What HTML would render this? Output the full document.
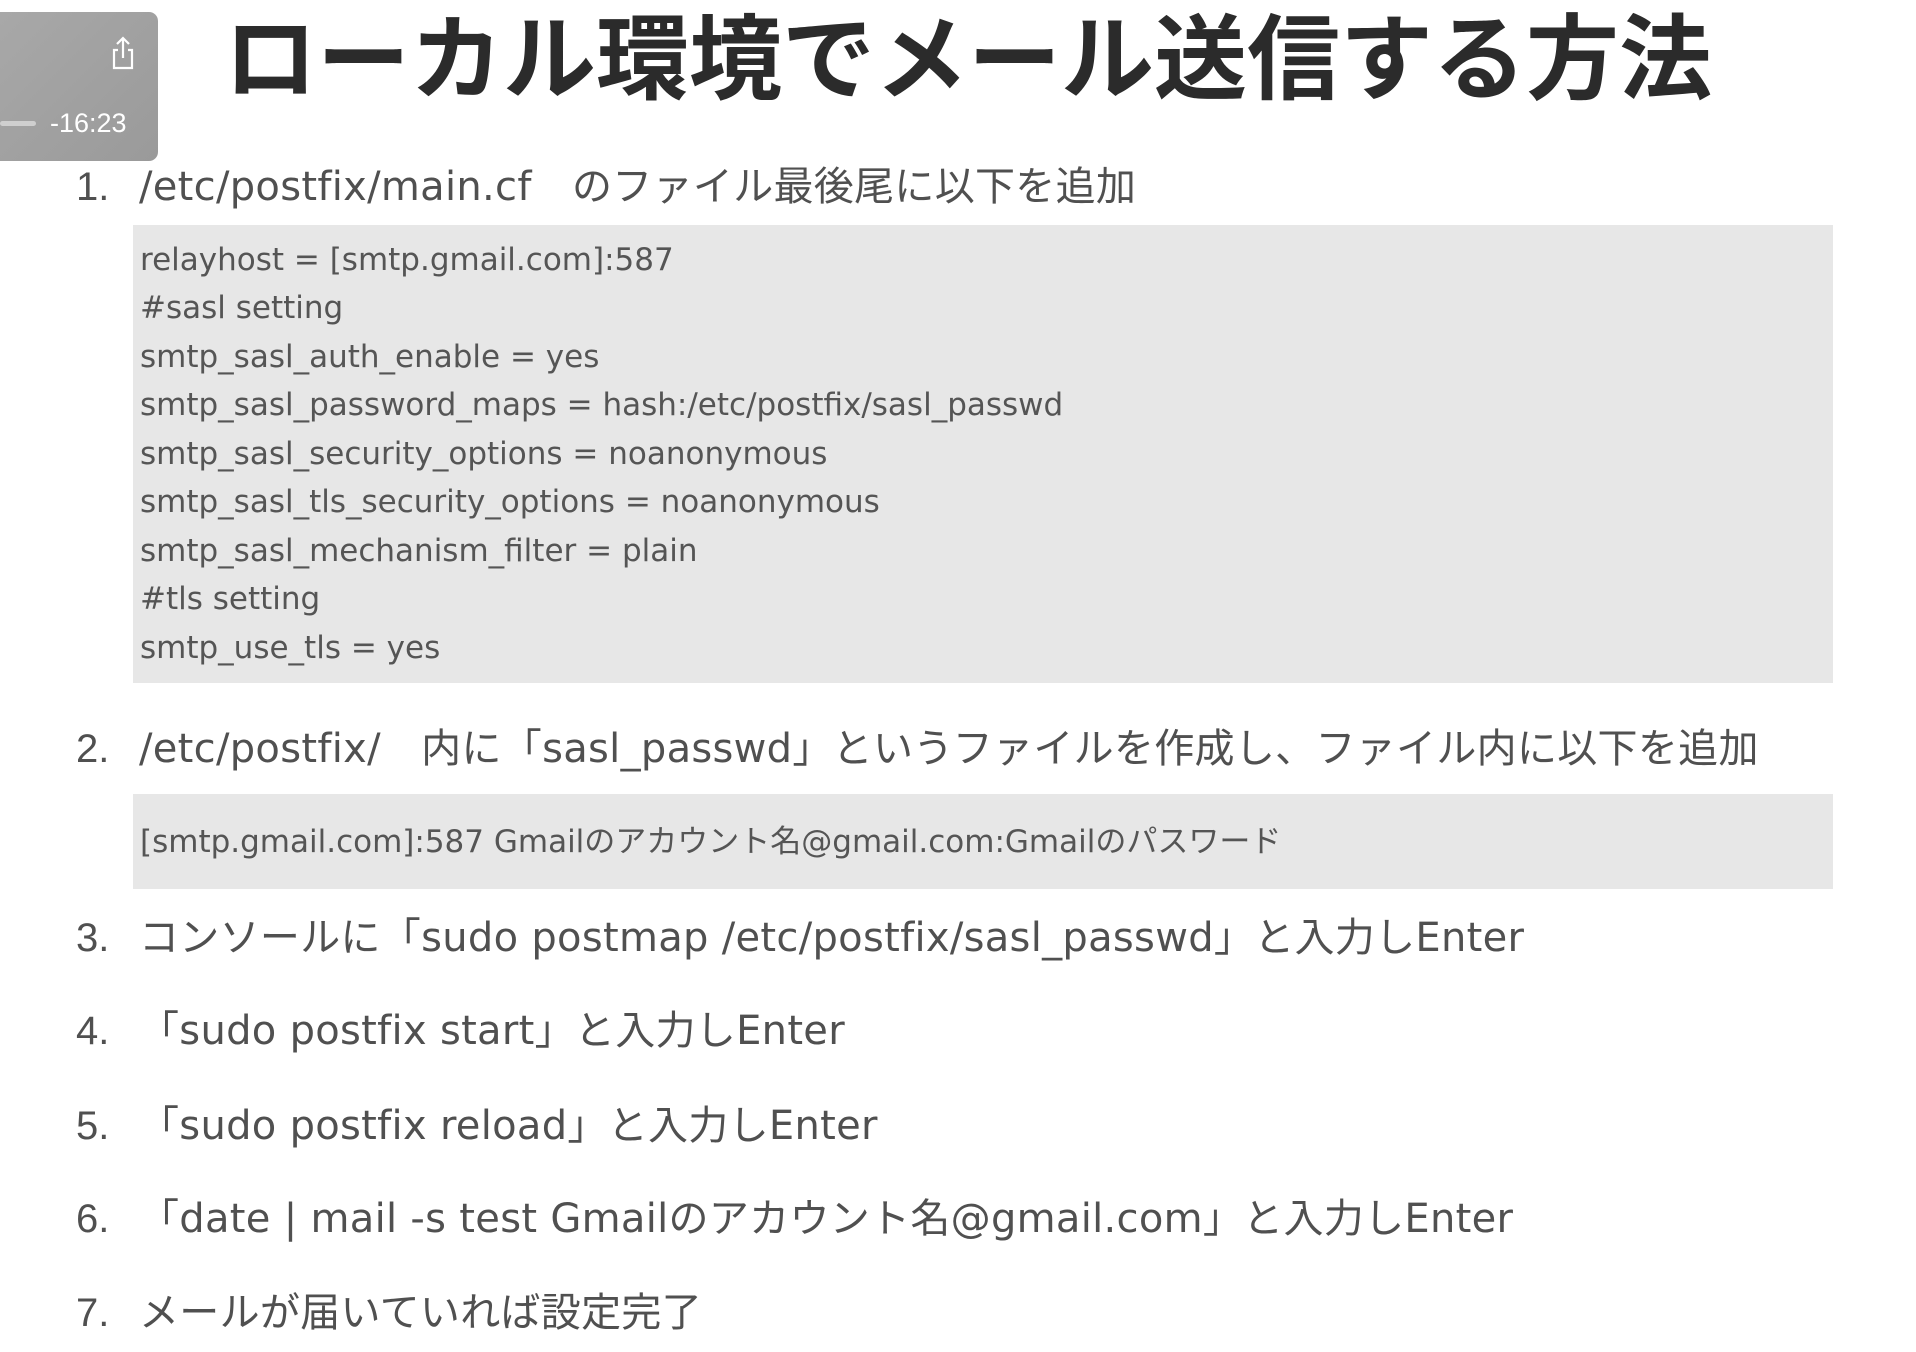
<!DOCTYPE html>
<html><head><meta charset="utf-8"><style>
body{margin:0;width:1916px;height:1352px;background:#fff;position:relative;overflow:hidden;font-family:"Liberation Sans","Noto Sans CJK JP",sans-serif;}
.a{position:absolute;white-space:nowrap;}
.t{left:224px;top:0px;font-size:93px;font-weight:bold;color:#2b2b2b;line-height:120px;}
.it{font-family:"DejaVu Sans","Noto Sans CJK JP",sans-serif;font-size:40px;color:#505050;line-height:50px;letter-spacing:0.3px;}
.n{font-size:40px;color:#505050;line-height:50px;left:76px;}
.box{position:absolute;background:#e7e7e7;left:133px;width:1700px;}
.c{font-family:"DejaVu Sans","Noto Sans CJK JP",sans-serif;font-size:31px;color:#555;line-height:40px;left:140px;}
</style></head><body>
<div class="a t">ローカル環境でメール送信する方法</div>

<div style="position:absolute;left:0;top:12px;width:158px;height:149px;border-radius:0 9px 9px 0;background:linear-gradient(135deg,#a8a8a8,#9a9a9a);"></div>
<svg style="position:absolute;left:110px;top:36px" width="26" height="36" viewBox="0 0 26 36"><path d="M13 2v20M7 8l6-6 6 6M8 14H4v18h18V14h-4" fill="none" stroke="#fff" stroke-width="2.2"/></svg>
<div style="position:absolute;left:0;top:121px;width:36px;height:5px;background:#cfcfcf;border-radius:3px"></div>
<div class="a" style="left:50px;top:108px;font-size:27px;color:#fff;line-height:30px">-16:23</div>

<div class="a n" style="top:162px">1.</div>
<div class="a it" style="left:139px;top:162px">/etc/postfix/main.cf　のファイル最後尾に以下を追加</div>
<div class="box" style="top:225px;height:458px"></div>
<div class="a c" style="top:240px">relayhost = [smtp.gmail.com]:587</div>
<div class="a c" style="top:288px">#sasl setting</div>
<div class="a c" style="top:337px">smtp_sasl_auth_enable = yes</div>
<div class="a c" style="top:385px">smtp_sasl_password_maps = hash:/etc/postfix/sasl_passwd</div>
<div class="a c" style="top:434px">smtp_sasl_security_options = noanonymous</div>
<div class="a c" style="top:482px">smtp_sasl_tls_security_options = noanonymous</div>
<div class="a c" style="top:531px">smtp_sasl_mechanism_filter = plain</div>
<div class="a c" style="top:579px">#tls setting</div>
<div class="a c" style="top:628px">smtp_use_tls = yes</div>

<div class="a n" style="top:724px">2.</div>
<div class="a it" style="left:139px;top:724px">/etc/postfix/　内に「sasl_passwd」というファイルを作成し、ファイル内に以下を追加</div>
<div class="box" style="top:794px;height:95px"></div>
<div class="a c" style="top:822px">[smtp.gmail.com]:587 Gmailのアカウント名@gmail.com:Gmailのパスワード</div>

<div class="a n" style="top:913px">3.</div>
<div class="a it" style="left:139px;top:913px">コンソールに「sudo postmap /etc/postfix/sasl_passwd」と入力しEnter</div>
<div class="a n" style="top:1006px">4.</div>
<div class="a it" style="left:139px;top:1006px">「sudo postfix start」と入力しEnter</div>
<div class="a n" style="top:1101px">5.</div>
<div class="a it" style="left:139px;top:1101px">「sudo postfix reload」と入力しEnter</div>
<div class="a n" style="top:1194px">6.</div>
<div class="a it" style="left:139px;top:1194px">「date | mail -s test Gmailのアカウント名@gmail.com」と入力しEnter</div>
<div class="a n" style="top:1288px">7.</div>
<div class="a it" style="left:139px;top:1288px">メールが届いていれば設定完了</div>
</body></html>
